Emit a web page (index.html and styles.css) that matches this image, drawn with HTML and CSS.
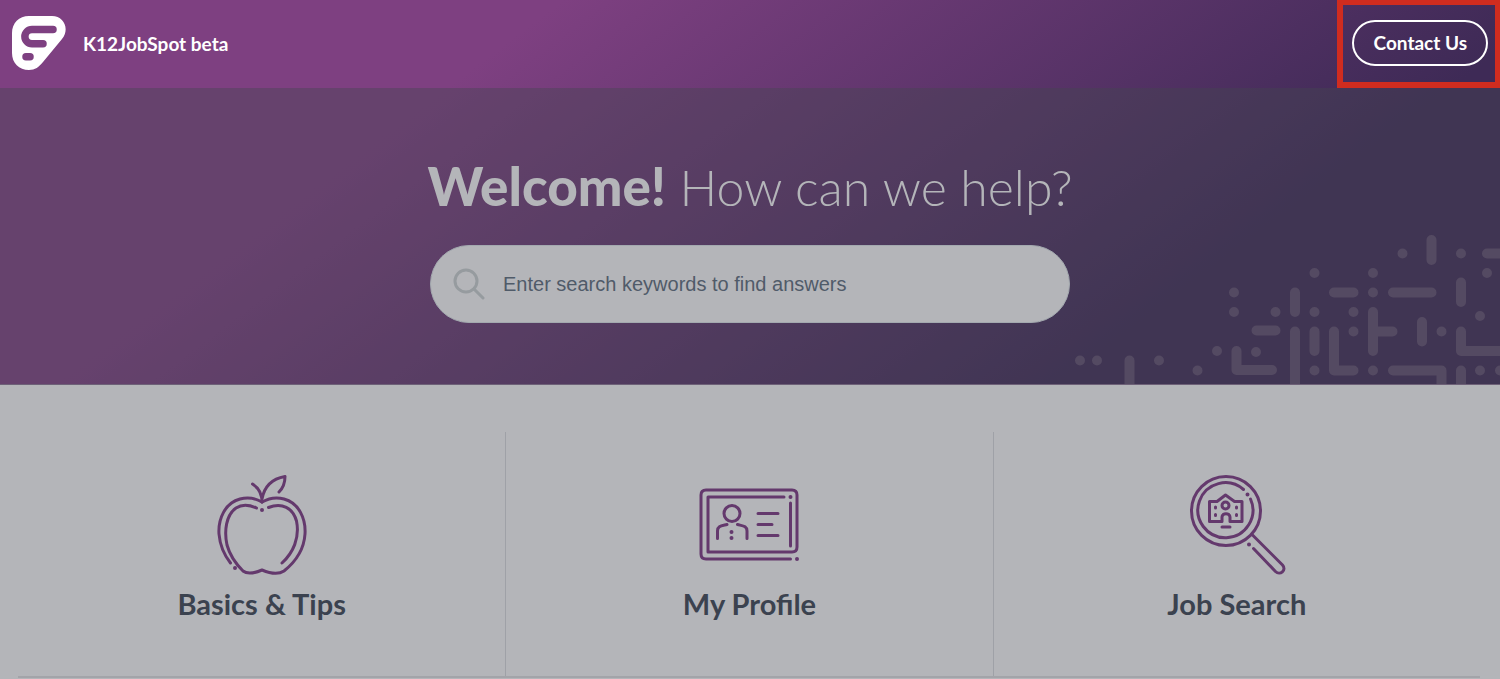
FILE: index.html
```html
<!DOCTYPE html>
<html lang="en">
<head>
  <meta charset="utf-8">
  <meta name="viewport" content="width=device-width">
  <title>K12JobSpot beta</title>
  <link rel="stylesheet" href="styles.css">
</head>
<body>
  <div class="banner">
    <header class="topbar">
      <a class="brand" href="#">
        <svg class="logo" viewBox="0 0 54 54" aria-hidden="true">
          <path fill="#fff" d="M17 0H40C52 0 58 13 50 23L31 46C27 51 23 54 17 54C7 54 0 47 0 37V17C0 7 7 0 17 0Z"/>
          <path class="logo-line" d="M41 13.500H20A7.100 7.100 0 0 0 20 27.700H31M14 40.700H18"/>
        </svg>
        <span>K12JobSpot beta</span>
      </a>
      <div class="highlight">
        <a class="contact" href="#">Contact Us</a>
      </div>
    </header>

    <section class="hero">
      <svg class="circuit" viewBox="1070 225 430 159" aria-hidden="true">
        <path d="M1080 360.500h0M1097 360.500h0M1129.500 360.500V400M1159 360.500h0M1197.500 370.500h0M1217 351h0M1234 292.500h0M1234 312h0
          M1256 352h0M1236.500 351V370H1272M1256.500 330.500H1275.500M1275.500 312h0M1295 292.500V312M1295 331.500V400M1314.500 273h0
          M1314.500 312h0M1314.500 331.500V351M1314.500 370.500h0M1334 331.500V370.500H1353.500M1334 292.500H1353.500M1353.500 312h0
          M1353.500 331.500h0M1373 273h0M1373 292.500h0M1373 312V351M1373 331.500H1392.500M1373 370.500h0M1393 292.500H1431.500
          M1393 370.500H1441.500V400M1402.500 253.500h0M1431.500 240V260M1422 322V341.500M1441.500 331.500h0M1461 253.500h0
          M1461 282.500V302M1461 331.500V351H1510M1461 370.500V400M1480 316h0M1480 370.500h0M1487 253.500H1510M1487 273h0M1500 370.500h0"/>
      </svg>
      <h1 class="title"><strong>Welcome!</strong> How can we help?</h1>
      <form class="search" role="search">
        <svg class="search-icon" viewBox="0 0 32 32" aria-hidden="true">
          <circle cx="13" cy="13" r="11"/>
          <path d="M21 21L30 30"/>
        </svg>
        <input class="search-input" type="search" aria-label="Search" placeholder="Enter search keywords to find answers">
      </form>
    </section>
  </div>

  <main class="topics">
    <a class="topic" href="#">
      <svg class="topic-icon" viewBox="212 475 100 100" aria-hidden="true">
        <path d="M262 502C255 498 247 497 240 499C225 503 218 519 219 534C220 546 225 556 230.500 563"/>
        <path d="M262 502C269 498 277 497 284 499C299 503 306 519 305 534C304 550 294 563 284 571C278 575 269 573 262 570C255 573 248 575 243 571C237 565 230 556 227 545C224 531 226 515 236 508C242 504 250 505 256.500 508"/>
        <path d="M268.500 507.500C282 502 293 508 296.500 521C300 538 293 553 282 563"/>
        <path d="M262 502C262 495 259 488 252.500 484M262 499C264 488 271 479 285 476.500C285 482 283 488 279 492"/>
        <path class="dot" d="M262 510h0M235 568h0"/>
      </svg>
      <h2 class="topic-name">Basics &amp; Tips</h2>
    </a>
    <a class="topic" href="#">
      <svg class="topic-icon" viewBox="699 475 100 100" aria-hidden="true">
        <path d="M790.500 559H706Q701 559 701 554V495Q701 490 706 490H792Q797 490 797 495V547Q797 552 792 552H708V497H784M790.500 503V546"/>
        <circle cx="732" cy="513.500" r="8"/>
        <path d="M717.500 538.500V531C717.500 526 721 526 727 524.500M747 538.500V531C747 526 743 526 737.500 524.500M758 513.500H778M758 524.500H772M758 535.500H778"/>
        <path class="dot" d="M790.500 497h0M797 559h0M731.500 532h0M731.500 538h0"/>
      </svg>
      <h2 class="topic-name">My Profile</h2>
    </a>
    <a class="topic" href="#">
      <svg class="topic-icon" viewBox="1187 475 100 100" aria-hidden="true">
        <circle cx="1226" cy="511" r="34.500"/>
        <path d="M1243.500 489.500A27.500 27.500 0 1 0 1250.500 499M1252.500 535L1282.500 565C1287 570 1280 576 1275.500 571.500L1253.500 548.500"/>
        <path d="M1209.500 521.500V501.500H1217L1225.500 495L1234.500 501.500H1242V521.500H1230V517C1230 512.500 1222 512.500 1222 517V521.500ZM1222 527H1230"/>
        <circle cx="1225.500" cy="505.500" r="3.500"/>
        <path d="M1215.500 507v1M1215.500 514.500v1M1236.500 507v1M1236.500 514.500v1"/>
        <path class="dot" d="M1247.500 494.500h0M1249 544.500h0"/>
      </svg>
      <h2 class="topic-name">Job Search</h2>
    </a>
  </main>
</body>
</html>
```

FILE: styles.css
```css
html, body, h1, h2 {
  margin: 0;
  padding: 0;
}

* {
  box-sizing: border-box;
}

body {
  background-color: #b4b5b9;
  color: #3b424f;
  font-family: Lato, "Liberation Sans", sans-serif;
}

a {
  color: inherit;
  text-decoration: none;
}

.banner {
  background: linear-gradient(143deg, #7e4081 28%, #3e2a56 78%);
}

.topbar {
  display: flex;
  justify-content: space-between;
  align-items: center;
  height: 88px;
  padding-left: 12px;
  color: #fff;
  font-size: 19px;
  font-weight: bold;
}

.brand {
  display: flex;
  align-items: center;
  gap: 17px;
  padding-bottom: 2px;
}

.logo {
  width: 54px;
  height: 54px;
}

.logo-line {
  fill: none;
  stroke: #7e4081;
  stroke-width: 7.5;
  stroke-linecap: round;
}

.highlight {
  height: 88px;
  padding: 15px 7px 0 9px;
  border: solid #d02c1f;
  border-width: 5px 5px 6px 6px;
}

.contact {
  display: block;
  padding: 0 19px 0 20px;
  border: 2px solid #fff;
  border-radius: 23px;
  line-height: 42px;
}

.hero {
  position: relative;
  padding: 62px 20px 61px;
  background-color: rgba(68, 69, 80, 0.4);
  border-bottom: 1px solid #6e6178;
  text-align: center;
}

.circuit {
  position: absolute;
  right: 0;
  bottom: 0;
  width: 430px;
  height: 159px;
  fill: none;
  stroke: #544a62;
  stroke-width: 10;
  stroke-linecap: round;
  stroke-linejoin: round;
}

.title {
  color: #b4b5b9;
  font-size: 50px;
  font-weight: 300;
  line-height: 72px;
}

.title strong {
  font-size: 53px;
  font-weight: 900;
}

.search {
  position: relative;
  display: flex;
  align-items: center;
  gap: 18px;
  max-width: 640px;
  height: 78px;
  margin: 22px auto 0;
  padding: 0 24px 0 22px;
  border: 1px solid #a3a9af;
  border-radius: 39px;
  background-color: #b4b5b9;
}

.search-icon {
  width: 32px;
  height: 32px;
  fill: none;
  stroke: #969b9f;
  stroke-width: 3;
  stroke-linecap: round;
}

.search-input {
  flex: 1;
  padding: 0;
  border: 0;
  outline: 0;
  background: none;
  color: #505b69;
  font-family: "Liberation Sans", Arial, sans-serif;
  font-size: 20px;
}

.search-input::placeholder {
  color: #505b69;
}

.topics {
  display: grid;
  grid-template-columns: repeat(3, 1fr);
  margin: 47px 20px 0 18px;
  border-bottom: 2px solid #a3a4a9;
}

.topic {
  display: flex;
  flex-direction: column;
  align-items: center;
  height: 244px;
  padding-top: 43px;
}

.topic + .topic {
  border-left: 1px solid #9fa1a7;
}

.topic-icon {
  width: 100px;
  height: 100px;
  fill: none;
  stroke: #64396d;
  stroke-width: 3;
  stroke-linecap: round;
  stroke-linejoin: round;
}

.topic-icon .dot {
  stroke-width: 4;
}

.topic-name {
  margin-top: 11px;
  font-size: 29px;
  font-weight: bold;
  line-height: 36px;
}
```
